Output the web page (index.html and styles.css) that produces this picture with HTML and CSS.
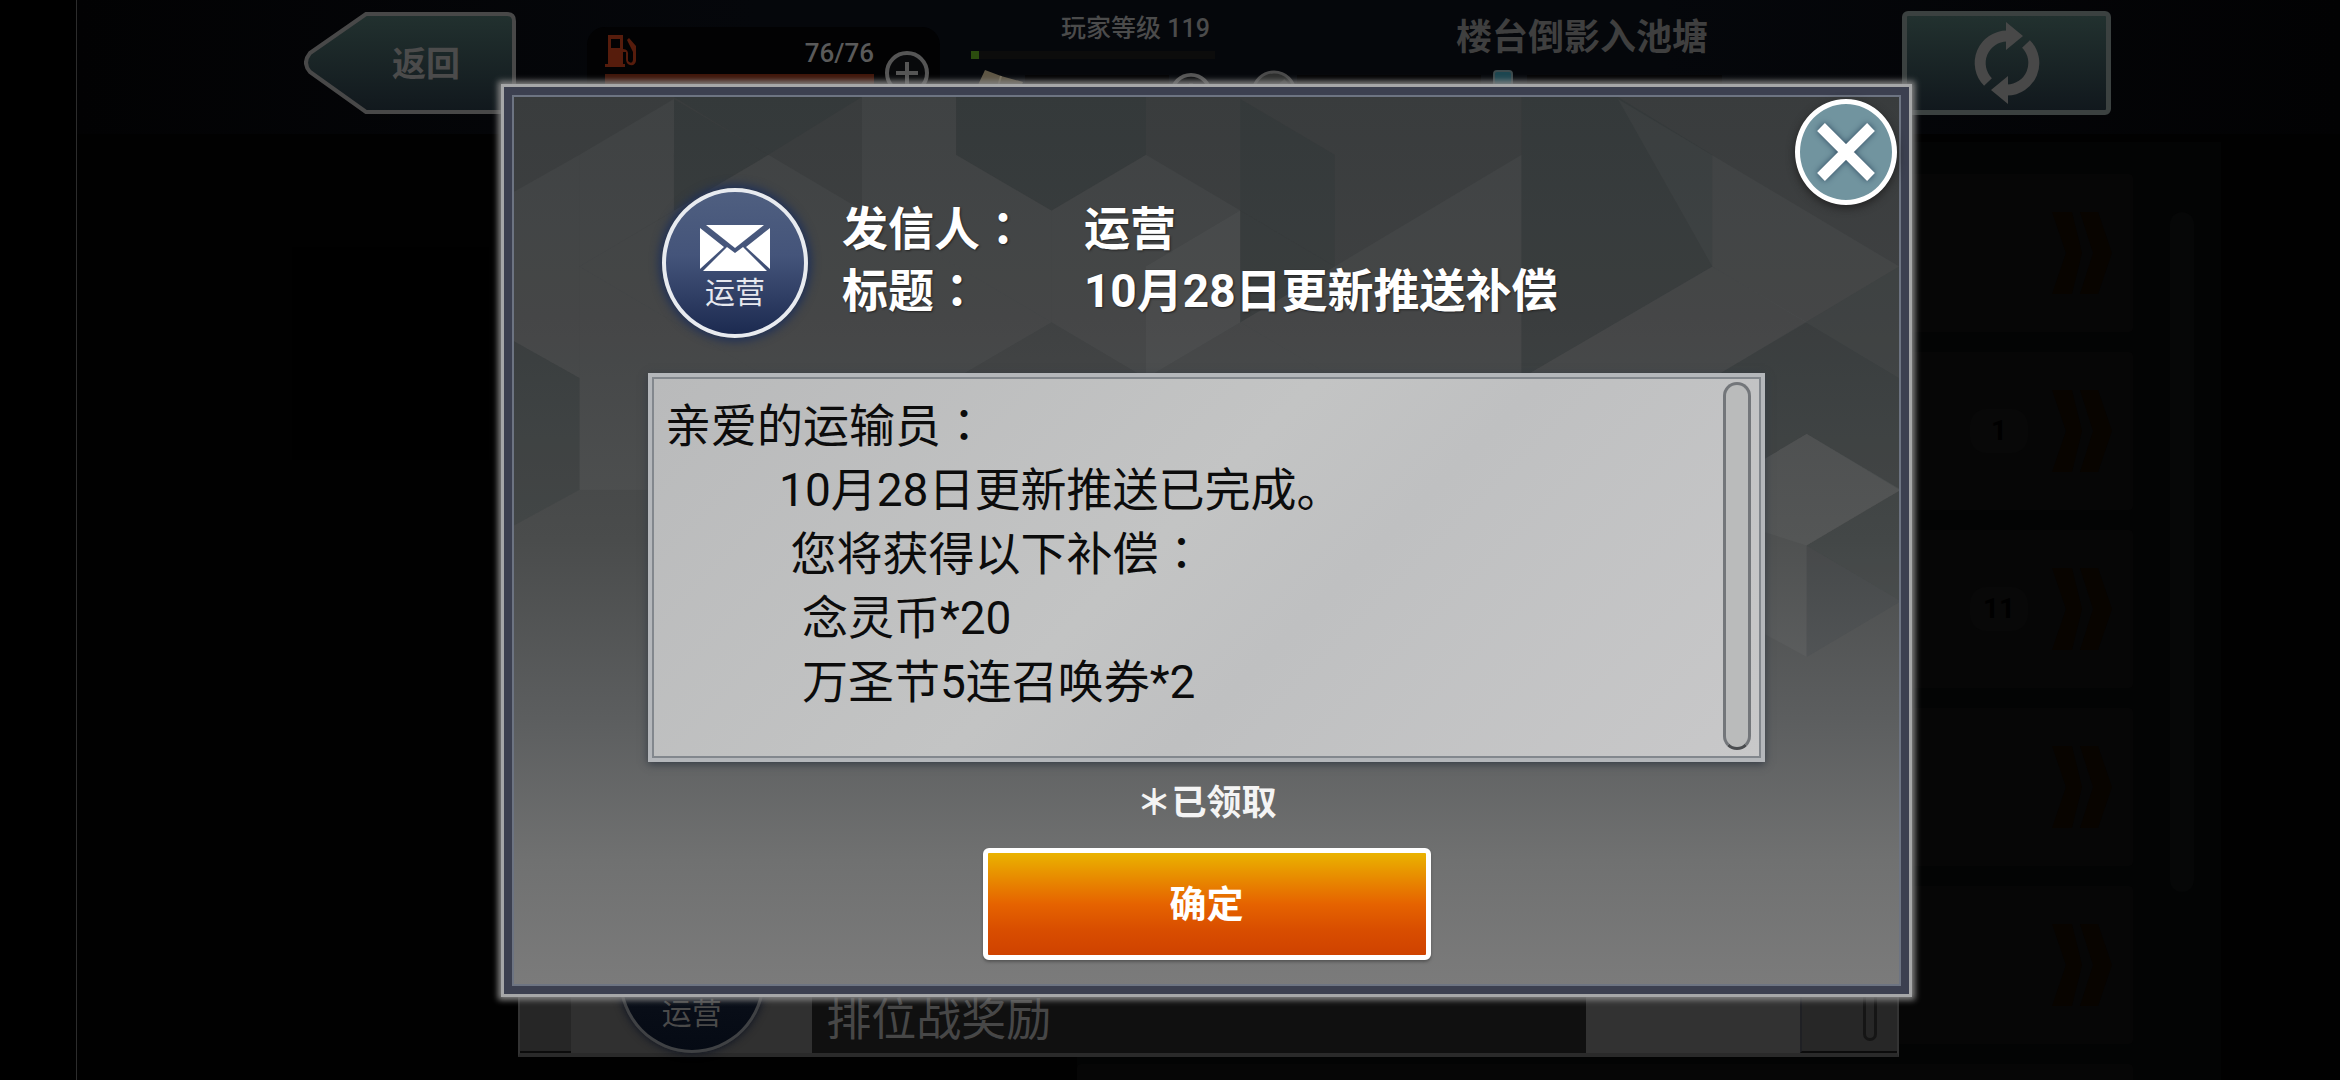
FILE: index.html
```html
<!DOCTYPE html>
<html lang="zh-CN">
<head>
  <meta charset="UTF-8" />
  <meta name="viewport" content="width=device-width, initial-scale=1" />
  <title>邮件</title>
  <link rel="stylesheet" href="styles.css">
</head>
<body>
  <div class="stage">
    <header class="topbar">
      <button class="back-button">
        <svg class="back-shape" viewBox="0 0 212 104" preserveAspectRatio="none" aria-hidden="true">
          <defs>
            <linearGradient id="backFill" x1="0" y1="0" x2="0" y2="1">
              <stop offset="0" stop-color="#22312f" />
              <stop offset="1" stop-color="#11181d" />
            </linearGradient>
          </defs>
          <path d="M62 3H203Q210 3 210 10V101H62L6 61Q-2 52 6 42Z" fill="url(#backFill)" stroke="#484848" stroke-width="4" />
        </svg>
        <span>返回</span>
      </button>

      <div class="fuel">
        <div class="fuel-top">
          <svg class="fuel-icon" viewBox="0 0 32 32" aria-hidden="true">
            <path d="M3 0H18V14Q24 14 23 21V26Q27 30 28 25V17L22 5L24 3L31 11V26Q30 31 25 30Q21 29 21 24V17H18V29H20V32H0V29H3ZM6 4V13H15V4Z" fill="#561c0c" fill-rule="evenodd" />
          </svg>
          <span>76/76</span>
        </div>
        <div class="fuel-bar"></div>
        <button class="plus" aria-label="补充燃料">
          <svg viewBox="0 0 46 46" aria-hidden="true">
            <circle cx="23" cy="23" r="20" fill="#08090b" stroke="#555" stroke-width="4" />
            <path d="M12 23H34M23 12V34" stroke="#555" stroke-width="4" />
          </svg>
        </button>
      </div>

      <div class="player">
        <div class="player-top">
          <div class="level">
            <div class="level-text">玩家等级 119</div>
            <div class="level-bar"><div class="level-fill"></div></div>
          </div>
          <div class="player-name">楼台倒影入池塘</div>
        </div>
        <div class="resources">
          <div class="resource">
            <svg viewBox="0 0 54 44" aria-hidden="true">
              <path d="M14 0L30 6L52 12L40 42L0 30Z" fill="#5e5644" />
              <path d="M30 6L22 34" stroke="#7a715c" stroke-width="2" />
            </svg>
            <div class="resource-bar"></div>
            <svg class="resource-plus" viewBox="0 0 46 46" aria-hidden="true">
              <circle cx="23" cy="23" r="20" fill="#08090b" stroke="#555" stroke-width="4" />
              <path d="M12 23H34M23 12V34" stroke="#555" stroke-width="4" />
            </svg>
          </div>
          <div class="resource">
            <svg viewBox="0 0 46 44" aria-hidden="true">
              <circle cx="23" cy="23" r="21" fill="#2c2d2c" stroke="#4a4a4a" stroke-width="3" />
              <path d="M14 32L36 12" stroke="#40413f" stroke-width="8" />
            </svg>
            <div class="resource-bar"></div>
          </div>
          <div class="resource">
            <svg viewBox="0 0 46 44" aria-hidden="true">
              <rect x="13" y="1" width="18" height="16" rx="3" fill="#1c4650" stroke="#3c4a4d" stroke-width="2" />
              <path d="M10 16H34L44 40H0Z" fill="#2e5b64" />
            </svg>
            <div class="resource-bar"></div>
          </div>
        </div>
      </div>

      <button class="refresh-button" aria-label="刷新">
        <svg viewBox="-34 -42 68 84" aria-hidden="true">
          <g fill="none" stroke="#484848" stroke-width="11">
            <path d="M-19 19A27 27 0 0 1 0 -27" />
            <path d="M19 -19A27 27 0 0 1 0 27" />
          </g>
          <path d="M-1 -41L16 -27L-1 -13ZM1 41L-16 27L1 13Z" fill="#484848" />
        </svg>
      </button>
    </header>

    <main class="lobby">
      <section class="notice"></section>
      <section class="mail-list">
        <ul class="mail-rows">
          <li><svg class="chevron" viewBox="0 0 60 82" aria-hidden="true"><path d="M0 0H20L30 41L20 82H0L14 41ZM28 0H46L60 41L46 82H28L41 41Z" /></svg></li>
          <li><span class="count">1</span><svg class="chevron" viewBox="0 0 60 82" aria-hidden="true"><path d="M0 0H20L30 41L20 82H0L14 41ZM28 0H46L60 41L46 82H28L41 41Z" /></svg></li>
          <li><span class="count">11</span><svg class="chevron" viewBox="0 0 60 82" aria-hidden="true"><path d="M0 0H20L30 41L20 82H0L14 41ZM28 0H46L60 41L46 82H28L41 41Z" /></svg></li>
          <li><svg class="chevron" viewBox="0 0 60 82" aria-hidden="true"><path d="M0 0H20L30 41L20 82H0L14 41ZM28 0H46L60 41L46 82H28L41 41Z" /></svg></li>
          <li><svg class="chevron" viewBox="0 0 60 82" aria-hidden="true"><path d="M0 0H20L30 41L20 82H0L14 41ZM28 0H46L60 41L46 82H28L41 41Z" /></svg></li>
          <li></li>
        </ul>
        <div class="mail-scroll"></div>
      </section>
    </main>

    <!-- mailbox window, under the open letter -->
    <div class="layer layer-bottom">
      <section class="mailbox">
        <div class="mailbox-edge"></div>
        <div class="mailbox-sender">
          <div class="mailbox-badge">运营</div>
        </div>
        <div class="mailbox-title">排位战奖励</div>
        <div class="mailbox-action"></div>
        <div class="mailbox-side"><div class="mailbox-scroll"></div></div>
      </section>
    </div>

    <!-- open letter -->
    <div class="layer layer-letter">
      <section class="letter" role="dialog" aria-labelledby="letter-title">
        <svg class="letter-pattern" viewBox="0 0 1394 890" preserveAspectRatio="none" aria-hidden="true">
          <g fill="#fff" fill-opacity=".03">
            <path d="M0 95L66 58V282L0 245Z" />
            <path d="M66 58L161 2V114L66 170Z" />
            <path d="M256 58L541 226L445 282H256L66 170Z" />
            <path d="M66 170L256 282V394H66Z" />
            <path d="M350 0H445V58L541 114V226L350 114Z" />
            <path d="M541 114L636 58L731 114V226L636 282L541 226Z" />
            <path d="M636 170L731 114V226L826 282H636Z" />
            <path d="M826 170L1014 58V282H826L731 226Z" />
            <path d="M1014 282L1206 170L1301 226L1206 282Z" />
            <path d="M1111 2L1394 170V282L1206 170Z" />
            <path d="M1206 394L1301 338L1396 394L1301 450L1206 420Z" />
            <path d="M1206 394L1301 338L1396 394L1301 450L1301 562L1206 510Z" />
          </g>
          <g fill="#1f2a2d" fill-opacity=".14">
            <path d="M161 0H350L256 58Z" />
            <path d="M161 2L256 58L161 114Z" />
            <path d="M0 245L66 282V394L0 430Z" />
            <path d="M445 0H636V58L541 114L445 58Z" />
            <path d="M731 2L826 58V170L731 114Z" />
            <path d="M731 114L826 170L731 226Z" />
            <path d="M1014 0H1111L1206 58V170L1014 282Z" />
            <path d="M1206 282L1394 170V394L1301 338L1206 394Z" />
            <path d="M1301 450L1396 394V506Z" />
          </g>
          <path d="M1301 450L1396 506L1301 562Z" fill="#1f2a2d" fill-opacity=".08" />
        </svg>

        <button class="close-button" aria-label="关闭">
          <svg viewBox="0 0 58 58" aria-hidden="true">
            <path d="M4 4L54 54M54 4L4 54" stroke="#fff" stroke-width="11" />
          </svg>
        </button>

        <div class="letter-head">
          <div class="badge">
            <svg viewBox="0 0 70 46" aria-hidden="true">
              <path d="M6 0H64L35 23Z" fill="#fff" />
              <path d="M0 3L24 22L0 44ZM70 3L46 22L70 44Z" fill="#fff" />
              <path d="M27 22L35 28L43 22L67 46H3Z" fill="#fff" />
            </svg>
            <span>运营</span>
          </div>
          <dl class="fields">
            <dt>发信人<span class="colon" lang="zh-TW">：</span></dt>
            <dd>运营</dd>
            <dt>标题<span class="colon" lang="zh-TW">：</span></dt>
            <dd id="letter-title">10月28日更新推送补偿</dd>
          </dl>
        </div>

        <div class="message">
          <div class="message-text">
            <p>亲爱的运输员<span class="colon" lang="zh-TW">：</span></p>
            <p>          10月28日更新推送已完成。</p>
            <p>           您将获得以下补偿<span class="colon" lang="zh-TW">：</span></p>
            <p>            念灵币*20</p>
            <p>            万圣节5连召唤券*2</p>
          </div>
          <div class="message-scroll"></div>
        </div>

        <p class="status">＊已领取</p>
        <button class="confirm-button">确定</button>
      </section>
    </div>
  </div>
</body>
</html>
```
FILE: styles.css
```css
* {
  box-sizing: border-box;
}

body {
  margin: 0;
  background: #000;
  font-family: Roboto, "Noto Sans CJK SC", sans-serif;
  overflow: hidden;
}

button {
  font-family: inherit;
  padding: 0;
  border: none;
  background: none;
  cursor: pointer;
}

svg {
  display: block;
}

/* centred full-width colon */
.colon {
  font-family: "Noto Sans CJK TC", sans-serif;
  line-height: 1;
}

.stage {
  position: relative;
  height: 100vh;
  margin-left: 76px;
  border-left: 1px solid #2c2c2c;
  background: #010101;
  display: flex;
  flex-direction: column;
}

/* Top bar */
.topbar {
  display: flex;
  align-items: flex-start;
  height: 134px;
  padding: 11px 229px 0 227px;
  background: linear-gradient(90deg, #020203, #05070b 30%, #05070b 70%, #020203);
}

.back-button {
  position: relative;
  width: 212px;
  height: 104px;
  padding: 0 0 4px 32px;
  font-size: 34px;
  font-weight: bold;
  color: #4b4b4b;
}

.back-shape {
  position: absolute;
  inset: 0;
  width: 100%;
  height: 100%;
}

.back-button span {
  position: relative;
}

.fuel {
  position: relative;
  width: 353px;
  height: 90px;
  margin: 16px 31px 0 71px;
  padding: 8px 66px 0 18px;
  border-radius: 18px;
  background: #020203;
}

.fuel-top {
  display: flex;
  justify-content: space-between;
  height: 39px;
  font-size: 26px;
  line-height: 36px;
  font-weight: 500;
  color: #5a5a5a;
}

.fuel-icon {
  width: 32px;
  height: 32px;
}

.fuel-bar {
  height: 14px;
  background: #3f1509;
}

.plus {
  position: absolute;
  right: 10px;
  top: 23px;
  width: 46px;
  height: 46px;
}

.player {
  flex: 1;
}

.player-top {
  display: flex;
  justify-content: space-between;
  padding-right: 194px;
  height: 59px;
}

.level {
  width: 244px;
}

.level-text {
  padding-left: 90px;
  font-size: 25px;
  line-height: 36px;
  font-weight: 500;
  color: #4b4b4b;
  white-space: nowrap;
}

.level-bar {
  height: 8px;
  margin-top: 4px;
  background: #0c0c0c;
}

.level-fill {
  width: 8px;
  height: 8px;
  background: #2b4c0e;
}

.player-name {
  font-size: 36px;
  line-height: 54px;
  font-weight: bold;
  color: #3f3f3f;
  white-space: nowrap;
}

.resources {
  display: grid;
  grid-template-columns: 280px 230px 1fr;
  padding-right: 180px;
}

.resource {
  display: flex;
  align-items: flex-start;
}

.resource svg {
  flex: none;
  height: 44px;
}

.resource-bar {
  flex: 1;
  height: 40px;
  margin-top: 5px;
  background: #010102;
}

.resource-plus {
  margin: 2px 38px 0 0;
}

.refresh-button {
  width: 209px;
  height: 104px;
  border: 5px solid #3b4140;
  border-radius: 6px;
  background: linear-gradient(#22312f, #11181d);
  display: flex;
  align-items: center;
  justify-content: center;
}

.refresh-button svg {
  width: 68px;
  height: 84px;
}

/* Lobby in the dark */
.lobby {
  flex: 1;
  min-height: 0;
  display: flex;
  justify-content: space-between;
  padding: 8px 119px 0 215px;
  overflow: hidden;
}

.notice {
  width: 600px;
  height: 213px;
  margin-top: 105px;
  background: #000;
}

.mail-list {
  display: flex;
  justify-content: space-between;
  width: 1144px;
  padding: 32px 27px 0 0;
  background: #030404;
}

.mail-rows {
  display: flex;
  flex-direction: column;
  gap: 20px;
  width: 1056px;
  margin: 0;
  padding: 0;
  list-style: none;
}

.mail-rows li {
  display: flex;
  flex: none;
  align-items: center;
  justify-content: flex-end;
  gap: 24px;
  height: 158px;
  padding-right: 21px;
  border-radius: 4px;
  background: #060606;
}

.count {
  width: 58px;
  border-radius: 16px;
  background: #080808;
  font-size: 28px;
  line-height: 44px;
  font-weight: bold;
  text-align: center;
  color: #000;
}

.chevron {
  width: 60px;
  height: 82px;
  fill: #080400;
}

.mail-scroll {
  width: 24px;
  height: 680px;
  margin-top: 38px;
  border-radius: 12px;
  background: #060707;
}

/* Layers */
.layer {
  position: absolute;
  inset: 0;
  display: flex;
  align-items: center;
  justify-content: center;
}

.layer-bottom {
  align-items: flex-end;
  padding-bottom: 23px;
}

.layer-letter {
  padding-right: 4px;
}

.mailbox {
  display: flex;
  width: 61%;
  height: 80vh;
  border: 2px solid #333;
  border-bottom: 4px solid #2a2a2a;
  background: #141414;
}

.mailbox-edge {
  width: 51px;
  background: #262626;
  border-bottom: 2px solid #0c0c0c;
}

.mailbox-sender {
  display: flex;
  align-items: flex-end;
  justify-content: center;
  width: 241px;
  background: #303030;
}

.mailbox-badge {
  display: flex;
  align-items: flex-end;
  justify-content: center;
  width: 146px;
  height: 150px;
  padding-bottom: 18px;
  border: 3px solid #3f4144;
  border-radius: 50%;
  background: linear-gradient(#10151f, #050a14);
  box-shadow: 0 0 8px #0a1020;
  font-size: 30px;
  line-height: 36px;
  color: #4a4a4a;
}

.mailbox-title {
  display: flex;
  flex: 1;
  align-items: flex-end;
  padding: 0 0 2px 14px;
  background: #101010;
  font-size: 45px;
  line-height: 60px;
  color: #474747;
}

.mailbox-action {
  width: 214px;
  background: #323232;
}

.mailbox-side {
  display: flex;
  align-items: flex-end;
  justify-content: flex-end;
  width: 97px;
  padding: 0 20px 10px 0;
  border-left: 2px solid #1f2024;
  border-bottom: 2px solid #0c0c0c;
  background: #272727;
}

.mailbox-scroll {
  width: 14px;
  height: 200px;
  border: 3px solid #151515;
  border-radius: 7px;
}

/* Letter */
.letter {
  position: relative;
  display: flex;
  flex-direction: column;
  width: 62.2%;
  padding: 93px 136px 26px;
  border: 8px solid #3c4050;
  outline: 3px solid #a6a7a8;
  background: linear-gradient(#393c3d, #3f4142 25%, #4a4c4c 50%, #5c5e5f 70%, #707171 86%, #7b7b7b);
  box-shadow: inset 0 0 0 2px #6d7482, 0 0 6px 6px #858585;
}

.letter-pattern {
  position: absolute;
  inset: 2px;
  width: calc(100% - 4px);
  height: calc(100% - 4px);
}

.close-button {
  position: absolute;
  top: 4px;
  right: 4px;
  display: flex;
  align-items: center;
  justify-content: center;
  width: 102px;
  height: 106px;
  border: 5px solid #fff;
  border-radius: 50%;
  background: #71949f;
  box-shadow: 0 3px 8px #222;
}

.close-button svg {
  width: 58px;
  height: 58px;
  filter: drop-shadow(0 0 3px #2f4a60);
}

.letter-head {
  position: relative;
  display: flex;
  align-items: center;
  gap: 34px;
  padding-left: 14px;
}

.badge {
  display: flex;
  flex-direction: column;
  align-items: center;
  width: 146px;
  height: 150px;
  padding-top: 33px;
  border: 4px solid #e8ebf0;
  border-radius: 50%;
  background: linear-gradient(#4f5f80, #44547a 45%, #1c2a50);
  box-shadow: 0 0 10px 3px #1f3058;
  font-size: 30px;
  line-height: 44px;
  color: #e6e8ee;
}

.badge svg {
  width: 70px;
  height: 46px;
}

.fields {
  display: grid;
  grid-template-columns: 242px auto;
  margin: 0;
  padding-bottom: 6px;
  font-size: 46px;
  line-height: 62px;
  font-weight: bold;
  color: #fff;
  text-shadow: 1px 1px 2px #222;
}

.fields dd {
  margin: 0;
}

.message {
  position: relative;
  display: flex;
  justify-content: space-between;
  margin-top: 35px;
  padding: 5px 10px 8px 13px;
  border: 4px solid #b4b7bb;
  background: linear-gradient(135deg, #b9babb, #c3c4c4 45%, #bfc0c1 60%, #c8c8c9);
  box-shadow: inset 0 0 0 2px #82878d, 0 2px 8px #353c46;
}

.message-text {
  padding: 12px 0 36px;
  font-size: 46px;
  line-height: 64px;
  color: #0c0c0c;
}

.message-text p {
  margin: 0;
  white-space: pre-wrap;
}

.message-scroll {
  width: 28px;
  border: 3px solid #73767a;
  border-bottom-color: #4a4c4f;
  border-radius: 14px;
  background: #babbbb;
}

.status {
  position: relative;
  margin: 18px 0 20px;
  font-size: 35px;
  line-height: 48px;
  font-weight: bold;
  text-align: center;
  color: #f4f4f4;
}

.confirm-button {
  position: relative;
  align-self: center;
  width: 448px;
  height: 112px;
  padding-bottom: 4px;
  border: 5px solid #fff;
  border-radius: 6px;
  background: linear-gradient(#eab300, #e88a00 25%, #e66300 50%, #d94e00 75%, #cf4200);
  box-shadow: 0 2px 3px #555;
  font-size: 37px;
  font-weight: bold;
  color: #fff;
}
```
